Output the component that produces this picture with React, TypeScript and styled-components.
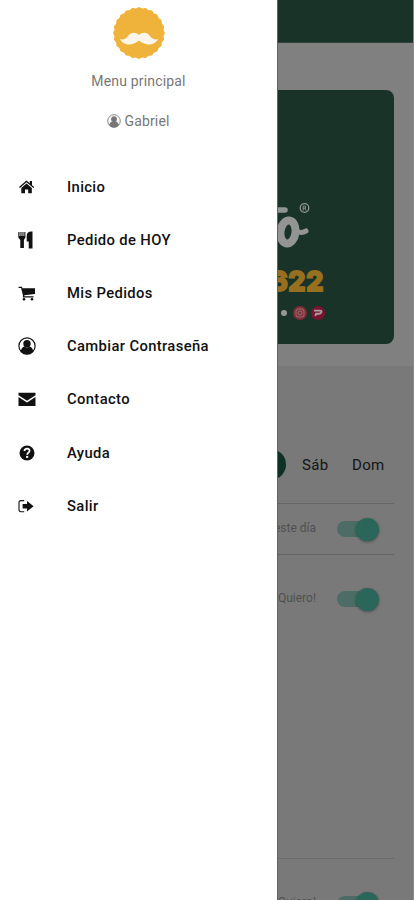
import React from "react";
import styled, { createGlobalStyle } from "styled-components";

const GlobalStyle = createGlobalStyle`
  *, *::before, *::after { box-sizing: border-box; }
  body { margin: 0; background: #fff; font-family: Roboto, "Liberation Sans", sans-serif; }
`;

const Screen = styled.div`
  display: flex;
  width: 415px;
  height: 900px;
  overflow: hidden;
  background: #fff;
`;

const Drawer = styled.aside`
  flex: 0 0 277px;
  display: flex;
  flex-direction: column;
  background: #fff;
`;

const DrawerHeader = styled.header`
  display: flex;
  flex-direction: column;
  align-items: center;
  height: 160px;
  padding-top: 7px;
  color: #777;
  font-size: 14px;
  line-height: 20px;
  letter-spacing: 0.18px;
`;

const Title = styled.div`
  margin-top: 12px;
`;

const UserName = styled.div`
  display: flex;
  align-items: center;
  gap: 3px;
  margin-top: 20px;
  letter-spacing: 0.15px;
`;

const Menu = styled.nav`
  display: flex;
  flex-direction: column;
`;

const MenuItem = styled.a`
  display: flex;
  align-items: center;
  height: 53.2px;
  padding-left: 18px;
  gap: 31px;
  color: #111;
  font-size: 14.8px;
  font-weight: 500;
  letter-spacing: 0.36px;
`;

const Icon = styled.svg<{ $size?: number }>`
  display: block;
  flex: none;
  width: ${(p) => p.$size ?? 18}px;
  height: ${(p) => p.$size ?? 18}px;
  fill: currentColor;
`;

const Page = styled.main`
  flex: 0 0 137px;
  display: flex;
  flex-direction: column;
  overflow: hidden;
  background: #808080;
  border-left: 1px solid #626262;
  border-right: 1px solid #898989;
`;

const TopBar = styled.div`
  flex: 0 0 43px;
  background: #193329;
  border-bottom: 1px solid #30443c;
`;

const Banner = styled.section`
  flex: 0 0 254px;
  display: flex;
  flex-direction: column;
  width: 116px;
  margin-top: 47px;
  padding-top: 110px;
  background: #193329;
  border-radius: 0 8px 8px 0;
`;

const Wordmark = styled.svg`
  display: block;
  flex: none;
  width: 40px;
  height: 52px;
`;

const Phone = styled.div`
  display: flex;
  justify-content: flex-end;
  width: 46px;
  height: 24px;
  margin-top: 17px;
  color: #97701f;
  font-family: Inter, Roboto, sans-serif;
  font-size: 27px;
  line-height: 26px;
  font-weight: 800;
  letter-spacing: 0.6px;
  -webkit-text-stroke: 1.8px #97701f;
  stroke-linejoin: round;
`;

const Socials = styled.div`
  display: flex;
  align-items: center;
  gap: 4px;
  height: 16px;
  margin: 12px 0 0 3px;
`;

const Dot = styled.span`
  width: 6px;
  height: 6px;
  margin-right: 2px;
  border-radius: 50%;
  background: #969896;
`;

const Lower = styled.section`
  flex: 1;
  display: flex;
  flex-direction: column;
  margin-top: 22px;
  padding-right: 19px;
  background: #797979;
`;

const Days = styled.div`
  flex: 0 0 138px;
  display: flex;
  align-items: center;
  padding-top: 60px;
  color: #151515;
  font-size: 15px;
  border-bottom: 1px solid #666;
`;

const SelectedDay = styled.span`
  flex: none;
  width: 31px;
  height: 31px;
  margin: 0 16px 0 -23px;
  border-radius: 50%;
  background: #0d3225;
`;

const Day = styled.span`
  flex: 0 0 50px;
  letter-spacing: 0.3px;
`;

const OptionRow = styled.div<{ $height: number; $line?: string }>`
  flex: 0 0 ${(p) => p.$height}px;
  display: flex;
  align-items: center;
  border-bottom: 1px solid ${(p) => p.$line ?? "transparent"};
  color: #505050;
  font-size: 12px;
`;

const OptionLabel = styled.span`
  display: flex;
  justify-content: flex-end;
  width: 38px;
  height: 16px;
  line-height: 16px;
  margin: -3px 21px 0 0;
  white-space: nowrap;
`;

const Track = styled.span`
  display: flex;
  align-items: center;
  justify-content: flex-end;
  width: 38px;
  height: 16px;
  border-radius: 8px;
  background: #4c6c65;
`;

const Thumb = styled.span`
  flex: none;
  width: 23px;
  height: 23px;
  margin-right: -4px;
  border-radius: 50%;
  background: #2a665a;
  box-shadow: 0 1px 3px rgba(0, 0, 0, 0.35);
`;

const Spacer = styled.div`
  flex: 0 0 215px;
  border-bottom: 1px solid #6b6b6b;
`;

const badgePoints = Array.from({ length: 720 }, (_, i) => {
  const a = (i / 720) * Math.PI * 2;
  const r = 25.3 + 0.5 * Math.cos(a * 24);
  return `${(26 + r * Math.cos(a)).toFixed(2)},${(26 + r * Math.sin(a)).toFixed(2)}`;
}).join(" ");

const Logo = () => (
  <Icon $size={52} viewBox="0 0 52 52">
    <polygon points={badgePoints} fill="#efb23b" />
    <path
      d="M26 28C23 25 18 25 15 29C13 32 10 33 7 32C9 37 16 39 21 36.500C23.500 35.500 25 34.500 26 33.500C27 34.500 28.500 35.500 31 36.500C36 39 43 37 45 32C42 33 39 32 37 29C34 25 29 25 26 28Z"
      fill="#fbf6e9"
    />
  </Icon>
);

const AccountIcon = ({ size = 18 }: { size?: number }) => (
  <Icon $size={size} viewBox="0 0 18 18">
    <circle cx="9" cy="9" r="8.100" fill="none" stroke="currentColor" strokeWidth="1.150" />
    <circle cx="9" cy="6.700" r="3.700" />
    <path d="M2.700 14.500C3.100 11.500 4.800 9.900 6.400 9.500Q9 11.300 11.600 9.500C13.200 9.900 14.900 11.500 15.300 14.500Q12.700 17.300 9 17.300T2.700 14.500Z" />
  </Icon>
);

const HomeIcon = () => (
  <Icon viewBox="0 0 18 18">
    <path d="M1 9L8.500 2.500L11.800 5.300V3.100H14V7.200L16.200 9L15.400 10L8.500 4.200L1.900 10Z" />
    <path d="M3.300 10L8.500 5.600L13.800 10V15.300H10.200V11.400H7V15.300H3.300Z" />
  </Icon>
);

const CutleryIcon = () => (
  <Icon viewBox="0 0 18 18">
    <path d="M.3 1H1.500V5H2.400V1H3.500V5H4.400V1H5.500V5H6.300V1H7.400V6.500L5.900 9V17H2.300V9L.3 6.500Z" />
    <path d="M13.200.5H14.500V17.500H10.700V10.500H8.700V5Q8.700.5 13.200.5Z" />
  </Icon>
);

const CartIcon = () => (
  <Icon viewBox="0 0 18 18">
    <path d="M.6 2.800H4L4.500 4.300H17V9.900L6.300 11.300V12.300H15.500V13.500H4.900V11.200L3.100 4.100H.6Z" />
    <circle cx="6" cy="15.300" r="1.300" />
    <circle cx="14" cy="15.300" r="1.300" />
  </Icon>
);

const MailIcon = () => (
  <Icon viewBox="0 0 18 18">
    <path d="M.5 2.800H17.500V5.200L9 10.800L.5 5.200Z" />
    <path d="M.5 6.900L9 12.500L17.500 6.900V16H.5Z" />
  </Icon>
);

const HelpIcon = () => (
  <Icon viewBox="0 0 18 18">
    <circle cx="9" cy="9" r="7.500" />
    <path d="M6.300 7Q7 4.600 9.200 4.700Q11.700 4.900 11.500 7C11.300 8.500 9.300 8.800 9.200 10.700" fill="none" stroke="#fff" strokeWidth="1.800" />
    <rect x="8.100" y="11.900" width="2.100" height="2" fill="#fff" />
  </Icon>
);

const ExitIcon = () => (
  <Icon viewBox="0 0 18 18">
    <path d="M6.200 3.600H3Q1 3.600 1 5.600V12.800Q1 14.700 3 14.700H6.200" fill="none" stroke="currentColor" strokeWidth="1.100" />
    <path d="M4.600 6.900H9V3.900L15.600 9.200L9 14.500V11.500H4.600Z" />
  </Icon>
);

const menu = [
  { label: "Inicio", icon: <HomeIcon /> },
  { label: "Pedido de HOY", icon: <CutleryIcon /> },
  { label: "Mis Pedidos", icon: <CartIcon /> },
  { label: "Cambiar Contraseña", icon: <AccountIcon /> },
  { label: "Contacto", icon: <MailIcon /> },
  { label: "Ayuda", icon: <HelpIcon /> },
  { label: "Salir", icon: <ExitIcon /> },
];

const Toggle = () => (
  <Track>
    <Thumb />
  </Track>
);

export default function App() {
  return (
    <>
      <GlobalStyle />
      <Screen>
        <Drawer>
          <DrawerHeader>
            <Logo />
            <Title>Menu principal</Title>
            <UserName>
              <AccountIcon size={14} />
              Gabriel
            </UserName>
          </DrawerHeader>
          <Menu>
            {menu.map((item) => (
              <MenuItem key={item.label}>
                {item.icon}
                {item.label}
              </MenuItem>
            ))}
          </Menu>
        </Drawer>
        <Page>
          <TopBar />
          <Banner>
            <Wordmark viewBox="0 0 40 52" fill="none" stroke="#929593" strokeLinecap="round">
              <path d="M-3 10H7" strokeWidth="5.500" />
              <ellipse cx="10" cy="32" rx="7.500" ry="11.500" strokeWidth="8" transform="rotate(7 10 32)" />
              <path d="M16 27C18 32 23 34 28 31" strokeWidth="5" />
              <circle cx="26.500" cy="8" r="4.300" strokeWidth="1.300" />
              <path d="M25.200 10.300V6H27Q28.500 7 27 8.200H25.200M27 8.200L28 10.300" strokeWidth=".9" />
            </Wordmark>
            <Phone>622</Phone>
            <Socials>
              <Dot />
              <Icon $size={14} viewBox="0 0 14 14">
                <circle cx="7" cy="7" r="7" fill="#802c37" />
                <g fill="none" stroke="#a08083" strokeWidth=".8">
                  <rect x="3" y="3" width="8" height="8" rx="2.300" />
                  <circle cx="7" cy="7" r="2" />
                  <path d="M9 4.700H9.500" />
                </g>
              </Icon>
              <Icon $size={14} viewBox="0 0 14 14">
                <circle cx="7" cy="7" r="7" fill="#77142f" />
                <path d="M3 4.600H9Q11 4.600 10.300 6.300Q9.900 7.700 8.200 7.700H5.200L4.300 10" fill="none" stroke="#aaa0a1" strokeWidth="1.900" />
              </Icon>
            </Socials>
          </Banner>
          <Lower>
            <Days>
              <SelectedDay />
              <Day>Sáb</Day>
              <Day>Dom</Day>
            </Days>
            <OptionRow $height={51} $line="#656565">
              <OptionLabel>este día</OptionLabel>
              <Toggle />
            </OptionRow>
            <OptionRow $height={89}>
              <OptionLabel>¡Quiero!</OptionLabel>
              <Toggle />
            </OptionRow>
            <Spacer />
            <OptionRow $height={90}>
              <OptionLabel>¡Quiero!</OptionLabel>
              <Toggle />
            </OptionRow>
          </Lower>
        </Page>
      </Screen>
    </>
  );
}
